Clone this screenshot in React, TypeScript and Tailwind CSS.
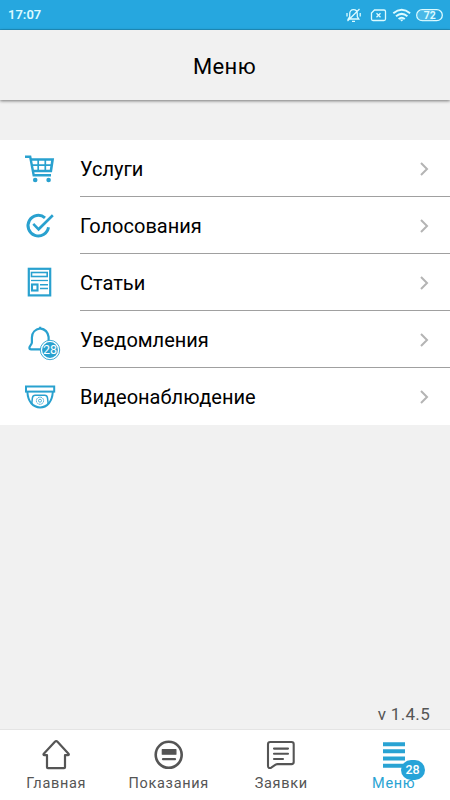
import type { ReactNode } from 'react';
import { clsx } from 'clsx';

function CartIcon() {
  return (
    <svg width="36" height="36" viewBox="0 0 36 36" fill="none" stroke="currentColor" strokeWidth="2.4">
      <path d="M3 6.8h5.2l3.5 18.4H29" />
      <path d="M8.5 9.5H30.6L28.9 21H10.8" strokeWidth="2.6" />
      <path d="M10 15.2h20M16.2 9v12M23.3 9v12" strokeWidth="1.7" />
      <circle cx="13.2" cy="30" r="2.3" fill="currentColor" stroke="none" />
      <circle cx="26.6" cy="30" r="2.3" fill="currentColor" stroke="none" />
    </svg>
  );
}

function VoteIcon() {
  return (
    <svg width="36" height="36" viewBox="0 0 36 36" fill="none" stroke="currentColor" strokeWidth="3">
      <path d="M23 10.8A10.3 10.3 0 1 0 26.5 20.3" />
      <path d="M12.2 17.8l4.4 4.5L29.9 9.2" strokeWidth="2.6" strokeLinecap="square" />
    </svg>
  );
}

function ArticleIcon() {
  return (
    <svg width="36" height="36" viewBox="0 0 36 36" fill="none" stroke="currentColor" strokeWidth="1.6">
      <rect x="6.8" y="4.8" width="21.4" height="26.6" strokeWidth="2.2" />
      <rect x="9.5" y="8.5" width="15.7" height="4" />
      <path d="M9 16.5h17" strokeWidth="1.3" />
      <rect x="10" y="20.5" width="5.5" height="6" strokeWidth="2.1" />
      <path d="M18 20.8h8M18 24.5h8" strokeWidth="1.6" />
    </svg>
  );
}

function BellIcon() {
  return (
    <svg width="40" height="40" viewBox="0 0 40 40" fill="none" stroke="currentColor" strokeWidth="2.2">
      <path d="M18.2 5.7v1.7c-5 .8-8.3 4.4-8.3 9v5.2c0 2-2.5 3-2.5 5.2 0 1 .7 1.5 1.7 1.5H20M18.2 7.4c4.8.8 7.8 4 8.4 8.6v4" />
      <circle cx="28" cy="29" r="9.7" fill="#fff" strokeWidth=".9" />
      <circle cx="28" cy="29" r="7.9" fill="currentColor" stroke="none" />
      <text x="28" y="33.4" fill="#fff" stroke="none" textAnchor="middle" className="text-[12.5px]">28</text>
    </svg>
  );
}

function CameraIcon() {
  return (
    <svg width="36" height="36" viewBox="0 0 36 36" fill="none" stroke="currentColor" strokeWidth="2">
      <rect x="4" y="8.5" width="28.2" height="5.1" />
      <path d="M5.4 14c.5 9.500 5.600 15.400 12.700 15.400S30.200 23.500 30.800 14" />
      <path d="M9.700 26l.7-6.200c.3-1.700 1-2.600 2.800-2.600h9.500c1.800 0 2.500.9 2.800 2.600l.7 6.200" strokeWidth="1.5" />
      <circle cx="18" cy="22.7" r="3.6" strokeWidth=".9" strokeDasharray="1.8 .6" />
      <circle cx="18" cy="22.7" r="1.5" strokeWidth=".8" />
    </svg>
  );
}

const menuItems = [
  { label: 'Услуги', icon: CartIcon },
  { label: 'Голосования', icon: VoteIcon },
  { label: 'Статьи', icon: ArticleIcon },
  { label: 'Уведомления', icon: BellIcon },
  { label: 'Видеонаблюдение', icon: CameraIcon },
];

function TabIcon({ children }: { children: ReactNode }) {
  return (
    <svg width="32" height="32" viewBox="0 0 32 32" fill="none" stroke="currentColor" strokeWidth="2.6" strokeLinejoin="round" strokeLinecap="round">
      {children}
    </svg>
  );
}

const tabs = [
  {
    label: 'Главная',
    icon: <path d="M16.2 2.2q-.7 0-1.3.6L3.8 14.7c-.6.7-.3 1.5.5 1.5h2.7v12.1c0 .6.3.9.9.9h16.2c.6 0 .9-.3.9-.9V16.2h3c.8 0 1.1-.8.5-1.5L17.5 2.8q-.6-.6-1.3-.6z" strokeWidth="2.2" />,
  },
  {
    label: 'Показания',
    icon: (
      <>
        <circle cx="15.7" cy="15.8" r="13" />
        <rect x="9.3" y="10.6" width="13.6" height="4.6" fill="currentColor" strokeWidth="1.2" />
        <path d="M10 20.2h12" strokeWidth="2.2" />
      </>
    ),
  },
  {
    label: 'Заявки',
    icon: (
      <>
        <path d="M5.2 3h21.3q2.2 0 2.2 2.2v17.7q0 2.2-2.2 2.2H12.5q-1 0-1.9.6L6.2 28.7q-3.2 1.2-3.2-2V5.2q0-2.2 2.2-2.2z" strokeWidth="2.1" />
        <path d="M9 9.6h14M9 14.8h14M9 20h9" strokeWidth="2.1" />
      </>
    ),
  },
  {
    label: 'Меню',
    icon: <path d="M5 5.3h22M5 12.3h22M5 19.5h22M5 26.7h22" strokeWidth="4" strokeLinecap="butt" />,
    badge: 28,
    active: true,
  },
];

function StatusBar() {
  return (
    <div className="flex h-[30px] shrink-0 items-center justify-between border-b border-[#2093c2] bg-[#26a7df] pl-2 pr-[7px] text-[#dcfbff]">
      <span className="text-[13px] font-semibold">17:07</span>
      <svg width="100" height="20" viewBox="0 0 100 20" fill="none" stroke="currentColor" strokeWidth="1.3">
        <path d="M5.2 14h10.6l-1.5-2.3V9c0-2.7-1.4-4.3-3.8-4.3S6.7 6.3 6.7 9v2.7zM9 16.3h3M4.5 16L16.5 4M4 8v3.5M17.2 8v3.5" />
        <path d="M31.5 5h9.5q1.5 0 1.5 1.5v7.5q0 1.5-1.5 1.5H30q-1.5 0-1.5-1.5V8z" />
        <path d="M33.5 8.2l4 4M37.5 8.2l-4 4" />
        <path d="M50.3 8.2q8.4-6.8 16.8 0M53 11.2q5.7-4.6 11.4 0M55.6 14q3.1-2.5 6.2 0" strokeWidth="2" />
        <path d="M56.8 14.5l1.9 2 1.9-2z" fill="currentColor" stroke="none" />
        <rect x="73.7" y="4.7" width="25.6" height="11" rx="5.5" />
        <path d="M80 5h10v10.400H80q-5.600-.5-5.600-5.200T80 5z" fill="#8ed9f5" opacity=".35" stroke="none" />
        <text x="86.7" y="14" textAnchor="middle" fill="currentColor" stroke="none" className="text-[10.5px] font-bold">72</text>
      </svg>
    </div>
  );
}

export default function App() {
  return (
    <div className="flex h-[800px] w-[450px] flex-col overflow-hidden bg-[#f1f1f1] font-['Roboto',sans-serif] text-black">
      <StatusBar />
      <header className="flex h-[70px] shrink-0 items-center justify-center pr-px pt-[3px] shadow-[0_1px_3px_rgba(0,0,0,0.5)]">
        <h1 className="text-[22px] tracking-[0.4px]">Меню</h1>
      </header>

      <ul className="mt-10 bg-white">
        {menuItems.map((item, i) => (
          <li key={item.label} className="flex h-[57px] pl-[22px]">
            <div className="w-[58px] shrink-0 pt-[10px] text-[#29a1cf]">
              <item.icon />
            </div>
            <div
              className={clsx(
                'flex flex-1 items-center justify-between border-b pr-5 pt-[2px]',
                i < menuItems.length - 1 ? 'border-[#a0a0a0]' : 'border-transparent'
              )}
            >
              <span className="text-[20px]">{item.label}</span>
              <svg width="12" height="14" viewBox="0 0 12 14" fill="none" stroke="#b4b4b4" strokeWidth="2">
                <path d="M3 1l6 6-6 6" />
              </svg>
            </div>
          </li>
        ))}
      </ul>

      <p className="mt-auto pb-[3px] pr-5 text-right text-[17px] leading-6 tracking-[0.3px] text-[#555]">v 1.4.5</p>

      <nav className="grid h-[71px] shrink-0 grid-cols-4 border-t border-[#e4e4e4] bg-white">
        {tabs.map((tab) => (
          <div
            key={tab.label}
            className={clsx(
              'relative flex flex-col items-center pt-[9px]',
              tab.active ? 'text-[#29a3d3]' : 'text-[#555]'
            )}
          >
            <TabIcon>{tab.icon}</TabIcon>
            <span className="mt-[3px] text-[14.5px] leading-5 tracking-[0.7px]">{tab.label}</span>
            {tab.badge && (
              <span className="absolute left-[63px] top-[30px] flex h-5 w-6 items-center justify-center rounded-full bg-[#26a3d8] text-[12.5px] font-medium text-white">
                {tab.badge}
              </span>
            )}
          </div>
        ))}
      </nav>
    </div>
  );
}
